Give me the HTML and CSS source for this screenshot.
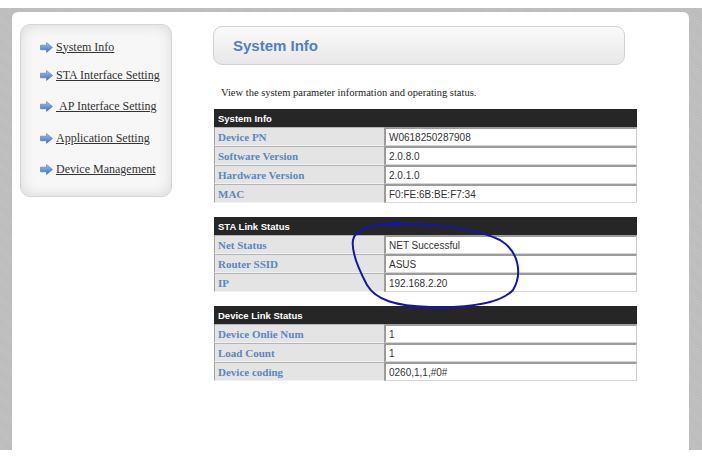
FILE: index.html
```html
<!DOCTYPE html>
<html>
<head>
<meta charset="utf-8">
<link rel="stylesheet" href="styles.css">
</head>
<body>
<div class="frame">
  <div class="panel">
    <nav class="sidebar">
      <a class="item" href="#"><svg class="arrow" viewBox="0 0 13 11"><defs><linearGradient id="ag" x1="0" y1="0" x2="0" y2="1"><stop offset="0" stop-color="#a9c8f5"/><stop offset="1" stop-color="#3565c4"/></linearGradient></defs><path d="M0.5 3.2H6.5V0.5L12.5 5.5L6.5 10.5V7.8H0.5Z" fill="url(#ag)" stroke="#5577aa" stroke-width="0.6"/></svg><span>System Info</span></a>
      <a class="item" href="#"><svg class="arrow" viewBox="0 0 13 11"><path d="M0.5 3.2H6.5V0.5L12.5 5.5L6.5 10.5V7.8H0.5Z" fill="url(#ag)" stroke="#5577aa" stroke-width="0.6"/></svg><span>STA Interface Setting</span></a>
      <a class="item" href="#"><svg class="arrow" viewBox="0 0 13 11"><path d="M0.5 3.2H6.5V0.5L12.5 5.5L6.5 10.5V7.8H0.5Z" fill="url(#ag)" stroke="#5577aa" stroke-width="0.6"/></svg><span>&nbsp;AP Interface Setting</span></a>
      <a class="item" href="#"><svg class="arrow" viewBox="0 0 13 11"><path d="M0.5 3.2H6.5V0.5L12.5 5.5L6.5 10.5V7.8H0.5Z" fill="url(#ag)" stroke="#5577aa" stroke-width="0.6"/></svg><span>Application Setting</span></a>
      <a class="item" href="#"><svg class="arrow" viewBox="0 0 13 11"><path d="M0.5 3.2H6.5V0.5L12.5 5.5L6.5 10.5V7.8H0.5Z" fill="url(#ag)" stroke="#5577aa" stroke-width="0.6"/></svg><span>Device Management</span></a>
    </nav>
    <main class="main">
      <div class="title">System Info</div>
      <p class="desc">View the system parameter information and operating status.</p>
      <table class="info">
        <tr><th colspan="2">System Info</th></tr>
        <tr><td class="lbl">Device PN</td><td class="val">W0618250287908</td></tr>
        <tr><td class="lbl">Software Version</td><td class="val">2.0.8.0</td></tr>
        <tr><td class="lbl">Hardware Version</td><td class="val">2.0.1.0</td></tr>
        <tr><td class="lbl">MAC</td><td class="val">F0:FE:6B:BE:F7:34</td></tr>
      </table>
      <table class="info">
        <tr><th colspan="2">STA Link Status</th></tr>
        <tr><td class="lbl">Net Status</td><td class="val">NET Successful</td></tr>
        <tr><td class="lbl">Router SSID</td><td class="val">ASUS</td></tr>
        <tr><td class="lbl">IP</td><td class="val">192.168.2.20</td></tr>
      </table>
      <table class="info">
        <tr><th colspan="2">Device Link Status</th></tr>
        <tr><td class="lbl">Device Onlie Num</td><td class="val">1</td></tr>
        <tr><td class="lbl">Load Count</td><td class="val">1</td></tr>
        <tr><td class="lbl">Device coding</td><td class="val">0260,1,1,#0#</td></tr>
      </table>
    </main>
  </div>
</div>
<svg class="scribble" viewBox="0 0 702 465" width="702" height="465">
  <path d="M381 225 C 420 222, 470 226, 500 240 C 520 252, 522 275, 513 290 C 501 303, 470 308, 430 307 C 395 306, 376 300, 367 285 C 358 268, 351 252, 353 240 C 355 230, 366 226, 386 224 L 400 222" fill="none" stroke="#1414b4" stroke-width="2" stroke-linecap="round" stroke-linejoin="round"/>
</svg>
</body>
</html>
```

FILE: styles.css
```css
html, body {
  margin: 0;
  padding: 0;
  background: #ffffff;
}
body {
  width: 702px;
  height: 465px;
  overflow: hidden;
  position: relative;
}
.frame {
  margin-top: 8px;
  height: 442px;
  box-sizing: border-box;
  padding: 4px 13px 0 12px;
  background-color: #bcbcbc;
  background-image: repeating-linear-gradient(45deg, rgba(255,255,255,0.07) 0 1px, transparent 1px 2px);
}
.panel {
  height: 100%;
  background: #ffffff;
  border-radius: 6px 6px 0 0;
  display: flex;
  align-items: flex-start;
}
.sidebar {
  margin: 12px 0 0 8px;
  width: 152px;
  height: 173px;
  box-sizing: border-box;
  border: 1px solid #d4d4d4;
  border-radius: 10px;
  background: #f7f7f7;
  box-shadow: inset 0 0 14px rgba(0,0,0,0.13);
  padding: 8px 0 0 19px;
  display: flex;
  flex-direction: column;
}
.item {
  height: 30.5px;
  display: flex;
  align-items: center;
  gap: 3px;
  font-family: "Liberation Serif", serif;
  font-size: 12px;
  color: #333333;
  text-decoration: underline;
}
.item:nth-child(1) { height: 28px; }
.item:nth-child(2) { height: 28px; }
.item:nth-child(3) { height: 34px; }
.item:nth-child(4) { height: 30px; }
.item:nth-child(5) { height: 32px; }
.arrow {
  width: 13px;
  height: 11px;
  flex: none;
}
.main {
  margin-left: 41px;
  padding-top: 14px;
}
.title {
  width: 412px;
  height: 39px;
  box-sizing: border-box;
  border: 1px solid #d2d2d2;
  border-radius: 9px;
  background: linear-gradient(#fafafa, #e8e8e8);
  padding-left: 19px;
  display: flex;
  align-items: center;
  font-family: "Liberation Sans", sans-serif;
  font-weight: bold;
  font-size: 15px;
  color: #4f80bf;
}
.desc {
  margin: 21px 0 9px 0;
  padding-left: 8px;
  font-family: "Liberation Serif", serif;
  font-size: 10.5px;
  line-height: 14px;
  color: #222222;
}
.info {
  width: 423px;
  margin: 0 0 14px 1px;
  border-collapse: separate;
  border-spacing: 0;
}
.info th {
  height: 18px;
  box-sizing: border-box;
  padding: 0 0 0 4px;
  background: #262626;
  color: #ffffff;
  text-align: left;
  font-family: "Liberation Sans", sans-serif;
  font-weight: bold;
  font-size: 9.5px;
}
.info td {
  height: 19px;
  box-sizing: border-box;
  padding: 0 0 0 3px;
}
.lbl {
  width: 170px;
  background: #e4e4e4;
  border-top: 1px solid #b4b4b4;
  border-left: 1px solid #a4a4a4;
  border-bottom: 1px solid #f2f2f2;
  font-family: "Liberation Serif", serif;
  font-weight: bold;
  font-size: 11px;
  color: #5b87bd;
}
.val {
  background: #ffffff;
  border-top: 2px solid #9c9c9c;
  border-left: 2px solid #9c9c9c;
  border-right: 1px solid #cccccc;
  border-bottom: 1px solid #d6d6d6;
  font-family: "Liberation Sans", sans-serif;
  font-size: 10px;
  color: #333333;
}
.scribble {
  position: absolute;
  left: 0;
  top: 0;
  pointer-events: none;
}
```
